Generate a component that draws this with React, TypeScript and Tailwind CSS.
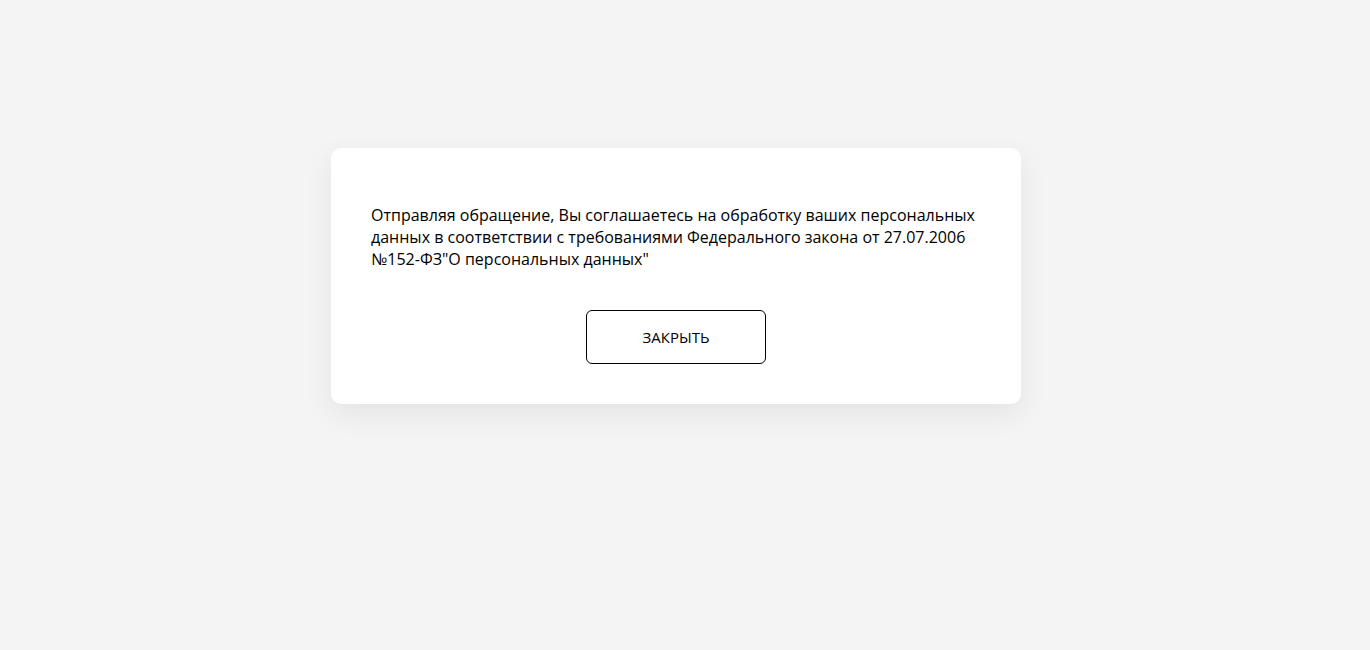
export default function App() {
  return (
    <div
      className="min-h-[650px] w-full bg-[#f4f4f4] pt-[148px] pl-[331px]"
      style={{ fontFamily: '"Open Sans", "Noto Sans", sans-serif' }}
    >
      <div className="w-[690px] rounded-[10px] bg-white px-10 pt-14 pb-10 shadow-[0_10px_30px_rgba(0,0,0,0.07)]">
        <p className="text-[16px] leading-[22px] text-black">
          Отправляя обращение, Вы соглашаетесь на обработку ваших персональных данных в соответствии с требованиями Федерального закона от 27.07.2006 №152-ФЗ"О персональных данных"
        </p>
        <div className="mt-10 flex justify-center">
          <button className="h-[54px] w-[180px] rounded-[6px] border border-black bg-white text-[15px] text-black">
            ЗАКРЫТЬ
          </button>
        </div>
      </div>
    </div>
  );
}
